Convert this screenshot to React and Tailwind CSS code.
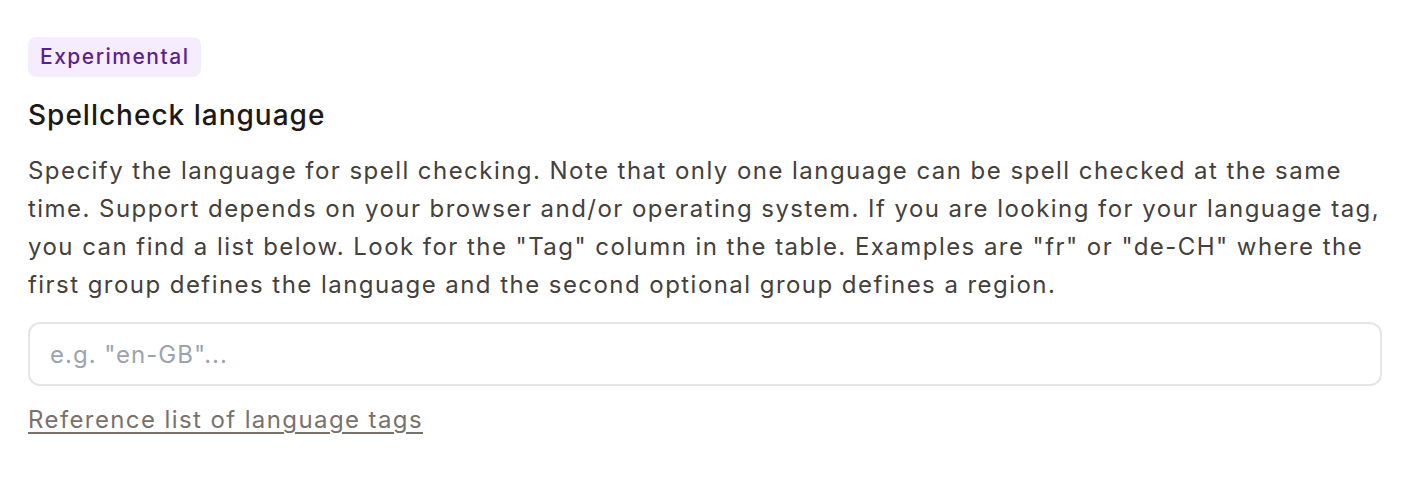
export default function App() {
  return (
    <div className="min-h-[480px] bg-white px-7 pt-[37px] font-['Inter',sans-serif] antialiased">
      <div className="flex flex-col items-start">
        <span className="rounded-lg bg-[#f5edfd] px-3 h-10 flex items-center text-[21px] tracking-[1.5px] font-medium text-[#5b1f8f]">
          Experimental
        </span>
        <h2 className="mt-[20px] text-[28px] leading-9 tracking-[1px] font-medium text-[#1c1917]">
          Spellcheck language
        </h2>
        <p className="mt-[19px] w-full text-[24px] leading-[38px] tracking-[1.45px] text-[#44403c]">
          Specify the language for spell checking. Note that only one language can be spell checked at the same time. Support depends on your browser and/or operating system. If you are looking for your language tag, you can find a list below. Look for the "Tag" column in the table. Examples are "fr" or "de-CH" where the first group defines the language and the second optional group defines a region.
        </p>
        <input
          type="text"
          placeholder={'e.g. "en-GB"...'}
          className="mt-[18px] h-16 w-[1354px] rounded-xl border-2 border-[#e7e5e4] bg-white px-5 text-[24px] tracking-[1px] text-[#44403c] placeholder:text-[#9ca3af] outline-none"
        />
        <a href="#" className="mt-[15px] text-[24px] leading-[38px] tracking-[1.4px] text-[#78716c] underline underline-offset-4">
          Reference list of language tags
        </a>
      </div>
    </div>
  );
}
